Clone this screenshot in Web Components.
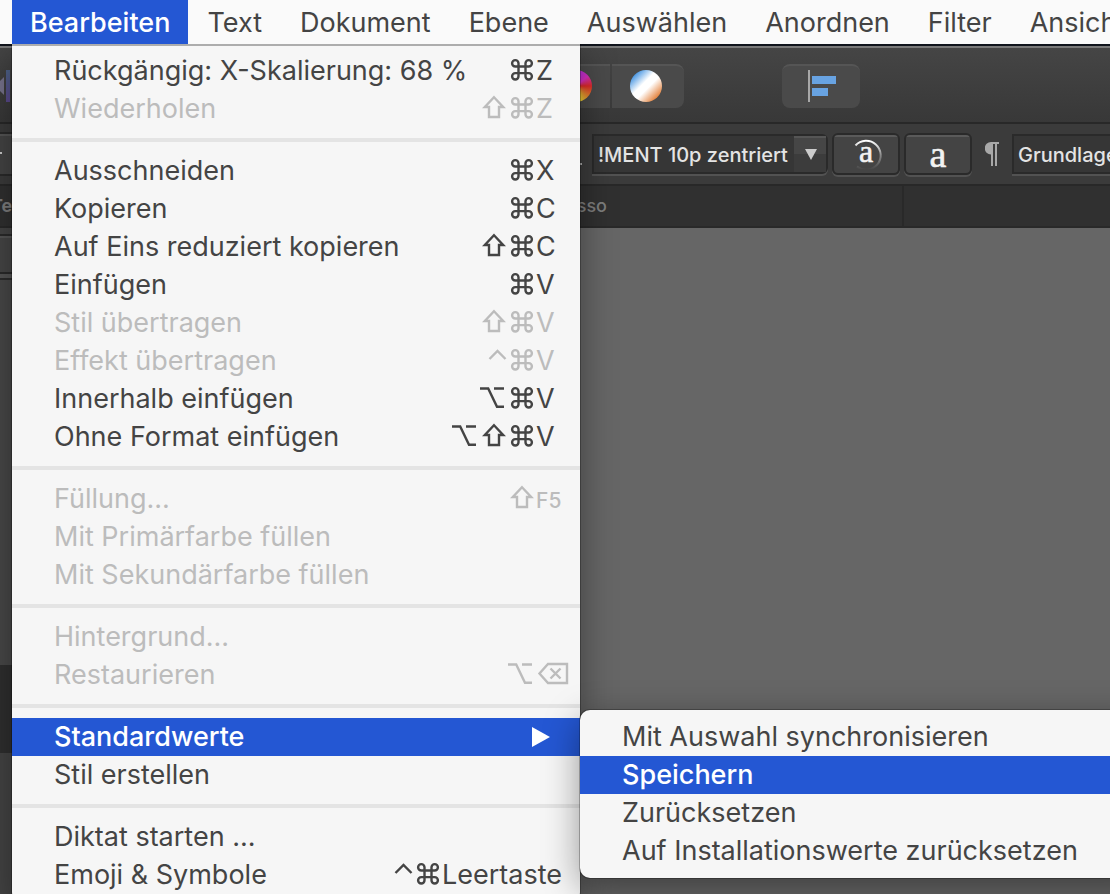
<!DOCTYPE html>
<html lang="de">
<head>
<meta charset="utf-8">
<title>Bearbeiten</title>
<style>
html, body{
    height: 100%;
}
body{
    margin: 0;
    overflow: hidden;
    background: #666;
    font-family: Inter, "Liberation Sans", sans-serif;
    font-size: 27px;
    color: #444;
    --blue: #2457d3;
    --panel: #f6f6f6;
    --row: 38px;
    --menu-left: 12px;
    --menu-width: 568px;
}
</style>
</head>
<body>
<app-window>
    <menu-bar slot="menubar">
        <menu-title active>Bearbeiten
            <menu-panel slot="menu">
                <menu-item>Rückgängig: X-Skalierung: 68 %<key-combo slot="keys" mods="cmd">Z</key-combo></menu-item>
                <menu-item disabled>Wiederholen<key-combo slot="keys" mods="shift cmd">Z</key-combo></menu-item>
                <menu-line></menu-line>
                <menu-item>Ausschneiden<key-combo slot="keys" mods="cmd">X</key-combo></menu-item>
                <menu-item>Kopieren<key-combo slot="keys" mods="cmd">C</key-combo></menu-item>
                <menu-item>Auf Eins reduziert kopieren<key-combo slot="keys" mods="shift cmd">C</key-combo></menu-item>
                <menu-item>Einfügen<key-combo slot="keys" mods="cmd">V</key-combo></menu-item>
                <menu-item disabled>Stil übertragen<key-combo slot="keys" mods="shift cmd">V</key-combo></menu-item>
                <menu-item disabled>Effekt übertragen<key-combo slot="keys" mods="ctrl cmd">V</key-combo></menu-item>
                <menu-item>Innerhalb einfügen<key-combo slot="keys" mods="opt cmd">V</key-combo></menu-item>
                <menu-item>Ohne Format einfügen<key-combo slot="keys" mods="opt shift cmd">V</key-combo></menu-item>
                <menu-line></menu-line>
                <menu-item disabled>Füllung...<key-combo slot="keys" mods="shift" small>F5</key-combo></menu-item>
                <menu-item disabled>Mit Primärfarbe füllen</menu-item>
                <menu-item disabled>Mit Sekundärfarbe füllen</menu-item>
                <menu-line></menu-line>
                <menu-item disabled>Hintergrund...</menu-item>
                <menu-item disabled>Restaurieren<key-combo slot="keys" mods="opt del"></key-combo></menu-item>
                <menu-line></menu-line>
                <menu-item selected parent>Standardwerte
                    <menu-panel slot="submenu" sub>
                        <menu-item>Mit Auswahl synchronisieren</menu-item>
                        <menu-item selected>Speichern</menu-item>
                        <menu-item>Zurücksetzen</menu-item>
                        <menu-item>Auf Installationswerte zurücksetzen</menu-item>
                    </menu-panel>
                </menu-item>
                <menu-item>Stil erstellen</menu-item>
                <menu-line></menu-line>
                <menu-item>Diktat starten ...</menu-item>
                <menu-item>Emoji &amp; Symbole<key-combo slot="keys" mods="ctrl cmd">Leertaste</key-combo></menu-item>
            </menu-panel>
        </menu-title>
        <menu-title>Text</menu-title>
        <menu-title>Dokument</menu-title>
        <menu-title>Ebene</menu-title>
        <menu-title>Auswählen</menu-title>
        <menu-title>Anordnen</menu-title>
        <menu-title>Filter</menu-title>
        <menu-title>Ansicht</menu-title>
    </menu-bar>
    <main-toolbar slot="bars"></main-toolbar>
    <text-toolbar slot="bars"></text-toolbar>
    <tab-strip slot="bars"></tab-strip>
    <side-panel></side-panel>
</app-window>

<script>
function define(name, html, setup){
    const template = document.createElement("template");
    template.innerHTML = html;
    customElements.define(name, class extends HTMLElement{
        constructor(){
            super();
            this.attachShadow({mode:"open"});
            this.shadowRoot.appendChild(template.content.cloneNode(true));
        }
        connectedCallback(){
            if(setup) setup(this, this.shadowRoot);
        }
    });
}

// 28px wide cells, as tall as a menu row
const glyphs = {
    cmd: `<svg width="28" height="38" viewBox="0 0 28 38"><path d="M10.5 14.500V11.300a3.200 3.200 0 1 0-3.200 3.200H20.700a3.200 3.200 0 1 0-3.200-3.200V24.300a3.200 3.200 0 1 0 3.200-3.200H7.300a3.200 3.200 0 1 0 3.200 3.200Z"/></svg>`,
    shift: `<svg width="28" height="38" viewBox="0 0 28 38"><path d="M14 7.200L23.200 17H19V27H9V17H4.800Z"/></svg>`,
    opt: `<svg width="28" height="38" viewBox="0 0 28 38"><path d="M0 8.500H8.200L17 26.700H24M14 8.500H24"/></svg>`,
    ctrl: `<svg width="28" height="38" viewBox="0 0 28 38"><path d="M9.500 17L17.500 9L25.500 17"/></svg>`,
    del: `<svg width="26" height="38" viewBox="0 0 26 38"><path d="M12 8H31V27H12L3.500 17.500ZM14.500 12.500L24.500 22.500M24.500 12.500L14.500 22.500"/></svg>`
};

define("key-combo", `
<style>
:host{
    display: flex;
    align-items: center;
}
svg{
    display: block;
    overflow: visible;
    fill: none;
    stroke: currentColor;
    stroke-width: 2.4;
}
.mods{
    display: flex;
}
.key{
    min-width: 26px;
    line-height: var(--row);
}
:host([small]) .key{
    font-size: 21px;
    font-weight: 500;
    padding-top: 4px;
}
</style>
<span class="mods"></span><span class="key"><slot></slot></span>
`, (el, root) => {
    const mods = el.getAttribute("mods").split(" ");
    root.querySelector(".mods").innerHTML = mods.filter(m => m !== "del").map(m => glyphs[m]).join("");
    if(mods.includes("del")) root.querySelector(".key").innerHTML = glyphs.del;
});

define("menu-line", `
<style>
:host{
    display: block;
    height: 4px;
    margin: 10px 0;
    background: #e4e4e4;
}
</style>
`);

define("menu-item", `
<style>
:host{
    display: block;
    position: relative;
}
button{
    display: flex;
    align-items: center;
    justify-content: space-between;
    width: 100%;
    height: var(--row);
    padding: 0 18px 0 42px;
    border: 0;
    background: none;
    font: inherit;
    line-height: var(--row);
    color: #444;
    text-align: left;
    white-space: nowrap;
}
button:disabled{
    color: #bcbcbc;
}
:host([selected]) button{
    background: var(--blue);
    color: #fff;
    font-weight: 500;
}
.arrow{
    display: none;
    margin-right: 12px;
    fill: #fff;
}
:host([parent]) .arrow{
    display: block;
}
</style>
<button type="button" role="menuitem">
    <span><slot></slot></span>
    <slot name="keys"></slot>
    <svg class="arrow" width="18" height="20" viewBox="0 0 18 20"><path d="M0 0L18 10L0 20Z"/></svg>
</button>
<slot name="submenu"></slot>
`, (el, root) => {
    root.querySelector("button").disabled = el.hasAttribute("disabled");
});

define("menu-panel", `
<style>
:host{
    display: block;
    position: absolute;
    top: 100%;
    left: 0;
    box-sizing: border-box;
    width: var(--menu-width);
    padding: 6px 0 8px;
    border-top: 2px solid #adadad;
    border-radius: 0 0 10px 10px;
    background: var(--panel);
    box-shadow: 0 0 0 1px rgba(0,0,0,.25), 0 10px 36px rgba(0,0,0,.4);
    font-weight: 400;
    /* no shadow on the menu bar above */
    clip-path: inset(0 -1000px -100px -100px);
}
:host([sub]){
    top: -8px;
    left: 100%;
    padding: 8px 0;
    border: 0;
    border-radius: 10px;
    clip-path: none;
}
</style>
<div role="menu"><slot></slot></div>
`);

define("menu-title", `
<style>
:host{
    display: block;
    position: relative;
    flex: none;
}
button{
    display: block;
    height: 44px;
    padding: 0 19px;
    border: 0;
    background: none;
    font: inherit;
    color: inherit;
}
:host([active]) button{
    padding: 0 18px;
    background: var(--blue);
    color: #fff;
    font-weight: 500;
}
</style>
<button type="button"><slot></slot></button>
<slot name="menu"></slot>
`);

define("menu-bar", `
<style>
:host{
    display: flex;
    position: relative;
    z-index: 2;
    height: 44px;
    padding-left: var(--menu-left);
    background: #fafafa;
}
</style>
<slot></slot>
`);

define("main-toolbar", `
<style>
:host{
    display: flex;
    align-items: center;
    box-sizing: border-box;
    height: 80px;
    padding-top: 4px;
    border-top: 2px solid #10141c;
    border-bottom: 2px solid #282828;
    background: linear-gradient(#7a7a7a 2px, #454545 2px, #383838);
}
.left{
    flex: none;
    width: 544px;
}
button{
    display: flex;
    align-items: center;
    justify-content: center;
    box-sizing: border-box;
    height: 44px;
    padding: 0 0 2px;
    border: 0;
    border-top: 2px solid #555;
    background: #4a4a4a;
}
.group{
    display: flex;
    gap: 2px;
    margin-right: 98px;
}
.group button:first-child{
    width: 66px;
    border-radius: 8px 0 0 8px;
}
.group button:last-child{
    width: 72px;
    padding-right: 4px;
    border-radius: 0 8px 8px 0;
}
.align{
    width: 78px;
    padding-left: 2px;
    border-radius: 8px;
}
.dot{
    width: 32px;
    height: 32px;
    border-radius: 50%;
}
.wheel{
    margin-right: 2px;
    background: conic-gradient(#a82fe0, #d92fc0 50deg, #e02a28 90deg, #e8c832 160deg, #4fc04a 210deg, #3a7de0 290deg, #a82fe0);
}
.fade{
    background: linear-gradient(135deg, #3a8ee0 12%, #fff 42%, #fff 56%, #e0782e 88%);
}
</style>
<svg class="left" height="32" viewBox="0 0 544 32"><defs><linearGradient id="p" x1="0" y1="0" x2="0" y2="1"><stop stop-color="#4d6288"/><stop offset="1" stop-color="#5b4a8e"/></linearGradient></defs><path fill="#77738c" d="M0 11L4 7V25L0 21Z"/><path fill="url(#p)" d="M6 0H10V32H6Z"/></svg>
<div class="group">
    <button type="button" aria-label="Farbe"><span class="dot wheel"></span></button>
    <button type="button" aria-label="Verlauf"><span class="dot fade"></span></button>
</div>
<button type="button" class="align" aria-label="Ausrichten">
    <svg width="28" height="32" viewBox="0 0 28 32"><path fill="#a8a8a8" d="M0 0H2V32H0Z"/><path fill="#68a3e2" d="M4 6H28V14H4ZM4 18H20V26H4Z"/></svg>
</button>
`);

define("text-toolbar", `
<style>
:host{
    display: flex;
    align-items: center;
    box-sizing: border-box;
    height: 62px;
    border-bottom: 2px solid #282828;
    background: #3b3b3b;
    color: #e4e4e4;
}
.stub{
    flex: none;
    box-sizing: border-box;
    width: 12px;
    height: 44px;
    border: solid #2a2a2a;
    border-width: 2px 0;
    background: linear-gradient(#555 2px, #444 2px);
}
.stub::before{
    content: "";
    display: block;
    width: 2px;
    height: 2px;
    margin-top: 18px;
    background: #ccc;
}
.mark{
    flex: none;
    width: 10px;
    height: 2px;
    margin: 20px 10px 0 560px;
    background: #aaa;
}
.combo{
    display: flex;
    flex: none;
    position: relative;
    box-sizing: border-box;
    width: 236px;
    height: 40px;
    border: 2px solid #2a2a2a;
    border-radius: 0 6px 6px 0;
    background: #363636;
    box-shadow: 0 2px #525252;
}
select{
    width: 100%;
    padding: 2px 32px 0 4px;
    border: 0;
    background: linear-gradient(#555 2px, #464646 2px, #464646 50%, #3c3c3c 50%) right / 32px 100% no-repeat;
    appearance: none;
    font: 500 20px Inter, "Liberation Sans", sans-serif;
    color: inherit;
}
.combo svg{
    position: absolute;
    right: 9px;
    top: 13px;
    fill: #ccc;
    pointer-events: none;
}
.style{
    flex: none;
    box-sizing: border-box;
    width: 68px;
    height: 42px;
    margin-left: 4px;
    padding: 0;
    border: 2px solid #2a2a2a;
    border-radius: 6px;
    background: linear-gradient(#5a5a5a 2px, #444 2px);
    box-shadow: 0 2px #525252;
}
.style svg{
    display: block;
    margin: auto;
    overflow: visible;
}
.style text{
    font-family: "Liberation Serif", serif;
    fill: #f2f2f2;
    stroke: #f2f2f2;
    stroke-width: .6;
    text-anchor: middle;
}
.para{
    flex: none;
    margin: 0 13px;
    fill: #a8a8a8;
}
</style>
<span class="stub"></span>
<span class="mark"></span>
<div class="combo">
    <select aria-label="Zeichenstil"><option>!MENT 10p zentriert</option></select>
    <svg width="12" height="12" viewBox="0 0 12 12"><path d="M0 0H12L6 11Z"/></svg>
</div>
<button type="button" class="style">
    <svg width="64" height="38" viewBox="0 0 64 38"><defs><linearGradient id="r" x1="0" y1="0" x2="0" y2="1"><stop stop-color="#fff"/><stop offset=".5" stop-color="#8a8a8a"/><stop offset="1" stop-color="#444"/></linearGradient></defs><path fill="none" stroke="url(#r)" stroke-width="2" d="M21.500 10.500A14.500 14.500 0 1 1 23 31.500"/><text x="32" y="27" font-size="32">a</text></svg>
</button>
<button type="button" class="style">
    <svg width="64" height="38" viewBox="0 0 64 38"><text x="32" y="32" font-size="38">a</text></svg>
</button>
<svg class="para" width="14" height="24" viewBox="0 0 14 24"><path d="M14 0V2H12V24H10V2H8V24H6V12.500A6 6 0 0 1 6 0Z"/></svg>
<div class="combo">
    <select aria-label="Absatzstil"><option>Grundlagen</option></select>
</div>
`);

define("tab-strip", `
<style>
:host{
    display: flex;
    box-sizing: border-box;
    height: 42px;
    border-bottom: 2px solid #292929;
    background: #303030;
    font-size: 18px;
    font-weight: 500;
    line-height: 40px;
    color: #7d7d7d;
}
.tab{
    box-sizing: border-box;
    flex: none;
    width: 904px;
    border-right: 2px solid #292929;
    display: flex;
    justify-content: space-between;
}
.tab span:first-child{
    margin-left: -9px;
    font-weight: 700;
}
.tab span:last-child{
    margin-right: 295px;
}
</style>
<div class="tab"><span>Te</span><span>sso</span></div>
`);

define("side-panel", `
<style>
:host{
    display: flex;
    flex-direction: column;
    width: var(--menu-left);
    height: 100%;
    background: #444;
}
.head{
    height: 36px;
    margin-top: 6px;
    border: solid #2a2a2a;
    border-width: 2px 0;
    background: linear-gradient(#555 2px, #464646 2px);
}
.rule{
    height: 4px;
    border-bottom: 2px solid #2c2c2c;
    background: #555;
}
.list{
    flex: 385;
    background: #484848;
}
.dark{
    flex: 88;
    background: #2f2f2f;
}
.foot{
    flex: 141;
}
</style>
<div class="head"></div>
<div class="rule"></div>
<div class="list"></div>
<div class="dark"></div>
<div class="foot"></div>
`);

define("app-window", `
<style>
:host{
    display: flex;
    flex-direction: column;
    height: 100%;
}
.canvas{
    flex: 1;
    min-height: 0;
    background: #666;
}
</style>
<slot name="menubar"></slot>
<slot name="bars"></slot>
<div class="canvas"><slot></slot></div>
`);
</script>
</body>
</html>
